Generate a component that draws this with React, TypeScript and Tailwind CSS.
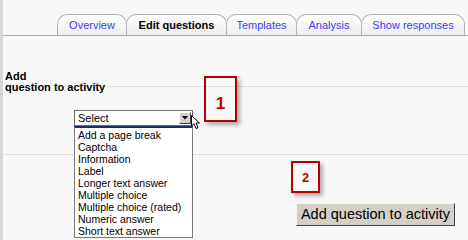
import React from "react";

const tabs = [
  { label: "Overview", w: 70, active: false },
  { label: "Edit questions", w: 101, active: true },
  { label: "Templates", w: 71, active: false },
  { label: "Analysis", w: 66, active: false },
  { label: "Show responses", w: 104, active: false },
];

const items = [
  "Add a page break",
  "Captcha",
  "Information",
  "Label",
  "Longer text answer",
  "Multiple choice",
  "Multiple choice (rated)",
  "Numeric answer",
  "Short text answer",
];

export default function App() {
  return (
    <div
      className="relative w-[468px] h-[240px] overflow-hidden bg-[#f8f8f8] border-l-[3px] border-[#d6d6d6]"
      style={{ fontFamily: '"Liberation Sans", Arial, sans-serif' }}
    >
      {/* Tab bar */}
      <div className="flex h-[36px] items-end pl-[55px] border-b border-[#a9a9a9]">
        {tabs.map((t) => (
          <div
            key={t.label}
            style={{ width: t.w }}
            className={`-ml-px flex h-[21px] items-center justify-center rounded-t-[10px] border border-b-0 border-[#b3b3b3] bg-gradient-to-b from-white to-[#ededed] pt-[1px] text-[11px] leading-[13px] ${
              t.active ? "font-bold text-black" : "text-[#3b3bff]"
            }`}
          >
            {t.label}
          </div>
        ))}
      </div>

      {/* Section 1 */}
      <div className="h-[118px] pt-[35px]">
        <div className="flex items-start pl-[2px]">
          <div className="text-[11px] font-bold leading-[11px] text-black">
            Add
            <br />
            question to activity
          </div>
          <div className="mt-[15px] flex-1 border-t border-[#e0e0e0]" />
        </div>
        <div className="ml-[71px] mt-[17px] flex h-[16px] w-[119px] items-center border border-[#6b6b6b] bg-white">
          <span className="flex-1 pl-[3px] text-[11px] leading-[12px] text-black">Select</span>
          <div className="mr-px flex h-[12px] w-[12px] items-center justify-center border border-t-white border-l-white border-r-[#404040] border-b-[#404040] bg-[#d4d0c8]">
            <svg width="6" height="4" viewBox="0 0 6 4">
              <path d="M0 0 H6 L3 3.5 Z" fill="#000" />
            </svg>
          </div>
        </div>
      </div>

      {/* Section 2 */}
      <div className="border-t border-[#e0e0e0] pt-[47px] pl-[293px]">
        <button className="h-[23px] w-[159px] border border-t-[#f4f4f4] border-l-[#f4f4f4] border-r-[#404040] border-b-[#404040] bg-[#d4d0c8] text-[14.5px] leading-[16px] text-black">
          Add question to activity
        </button>
      </div>

      {/* Cursor */}
      <svg className="absolute left-[188px] top-[115px]" width="11" height="15" viewBox="0 0 11 15">
        <path d="M0.5 0.5 L0.5 11 L3 8.7 L5 13.5 L7 12.7 L5 8 L8.5 8 Z" fill="#fff" stroke="#000" strokeWidth="1" strokeLinejoin="round" />
      </svg>

      {/* Dropdown list */}
      <div className="absolute left-[71px] top-[126px] w-[119px] border border-[#7a7a7a] border-t-2 border-t-[#1c2a6e] bg-white pl-[3px] pt-[1px]">
        {items.map((it) => (
          <div key={it} className="h-[12px] text-[10.5px] leading-[12px] text-black">
            {it}
          </div>
        ))}
      </div>

      {/* Annotation 1 */}
      <div className="absolute left-[201px] top-[76px] flex h-[46px] w-[33px] items-end justify-center border-2 border-[#b50000] pb-[8px] text-[17px] font-bold leading-[17px] text-[#c00000] shadow-[3px_3px_4px_rgba(0,0,0,0.3)]">
        1
      </div>

      {/* Annotation 2 */}
      <div className="absolute left-[288px] top-[161px] flex h-[32px] w-[29px] items-end justify-center border-2 border-[#b50000] pb-[6px] text-[13px] font-bold leading-[14px] text-[#c00000] shadow-[3px_3px_4px_rgba(0,0,0,0.3)]">
        2
      </div>
    </div>
  );
}
